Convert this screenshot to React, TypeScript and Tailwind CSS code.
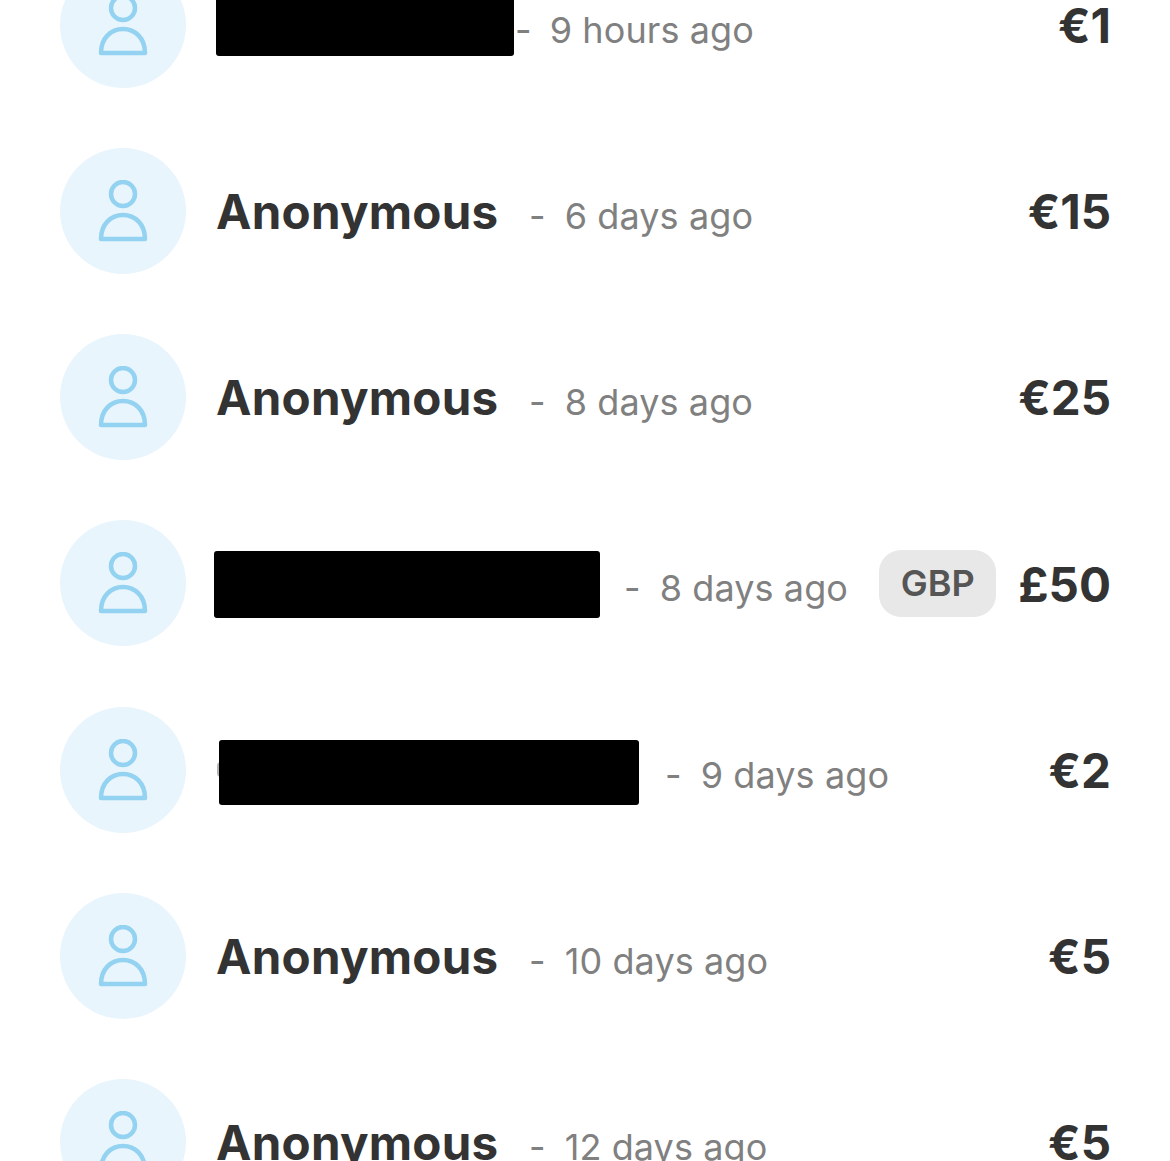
const rows = [
  { name: null, redact: "w-[298px] h-[62px]", nameBox: "w-[299px] ml-[30px]", dash: "mr-[18px]", ago: "9 hours ago", amount: "€1" },
  { name: "Anonymous", ago: "6 days ago", amount: "€15" },
  { name: "Anonymous", ago: "8 days ago", amount: "€25" },
  { name: null, redact: "w-[386px] h-[67px] mt-[2px]", nameBox: "w-[410px] ml-[28px]", ago: "8 days ago", amount: "£50", badge: "GBP" },
  { name: null, redact: "w-[420px] h-[65px] mt-[5px]", nameBox: "w-[446px] ml-[33px]", ago: "9 days ago", amount: "€2", peek: true },
  { name: "Anonymous", ago: "10 days ago", amount: "€5" },
  { name: "Anonymous", ago: "12 days ago", amount: "€5" },
];

function PersonIcon() {
  return (
    <svg width="50" height="62" viewBox="0 0 50 62" fill="none" stroke="#93d2f0" strokeWidth="4.5" strokeLinejoin="round">
      <circle cx="25" cy="14" r="12" />
      <path d="M3 59 C3 44 13 35 25 35 C37 35 47 44 47 59 Z" />
    </svg>
  );
}

export default function App() {
  return (
    <div className="h-[1161px] overflow-hidden bg-white font-['Inter',sans-serif]">
      <div className="-mt-[38.2px] flex flex-col gap-[60.2px] pr-[59px] pl-[60px]">
        {rows.map((row, i) => (
          <div key={i} className="flex h-[126px] items-center">
            <div className="flex h-[126px] w-[126px] shrink-0 items-center justify-center rounded-full bg-[#e8f5fc]">
              <PersonIcon />
            </div>
            {row.name ? (
              <span className="mt-[2px] ml-[30px] w-[313px] text-[47.5px] leading-none font-bold tracking-[0.25px] text-[#333333]">
                {row.name}
              </span>
            ) : (
              <div className={`relative ${row.nameBox}`}>
                {/* sliver of the covered name, left of the redaction */}
                {row.peek && <div className="absolute top-[27px] -left-[2px] h-[15px] w-[4px] rounded-l-full border-l-2 border-[#b5b5b5]" />}
                <div className={`relative ${row.redact} rounded-[3px] bg-black`} />
              </div>
            )}
            <span className="mt-[10px] text-[36px] leading-none tracking-[0.1px] text-[#808080]">
              <span className={row.dash ?? "mr-[19px]"}>-</span>
              {row.ago}
            </span>
            <div className="mt-[2px] ml-auto flex items-center gap-[23px]">
              {row.badge && (
                <span className="-mt-[2px] -mr-px flex h-[67px] w-[117px] items-center justify-center rounded-[22px] bg-[#e8e8e8] text-[36px] font-semibold text-[#555555]">
                  {row.badge}
                </span>
              )}
              <span className="text-[47.5px] leading-none font-bold text-[#333333]">{row.amount}</span>
            </div>
          </div>
        ))}
      </div>
    </div>
  );
}
